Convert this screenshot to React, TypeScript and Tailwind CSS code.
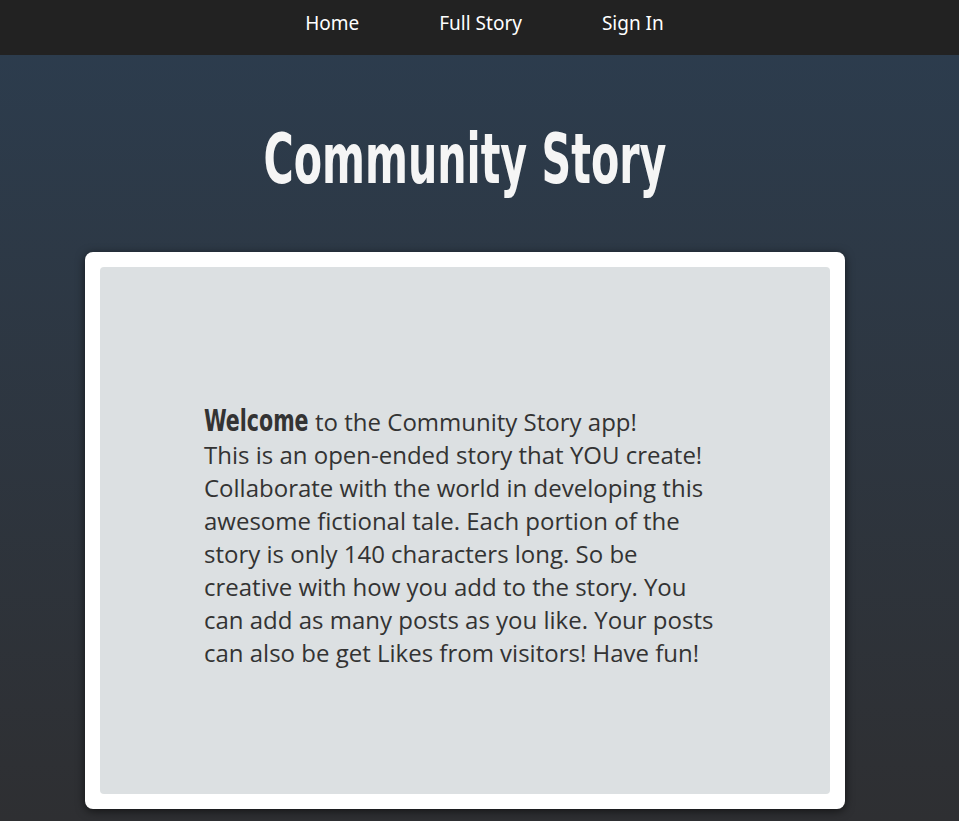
export default function App() {
  const links = ["Home", "Full Story", "Sign In"];

  return (
    <div className="min-h-screen bg-gradient-to-b from-[#2c3d4f] to-[#2e2f32] font-['Open_Sans',sans-serif]">
      <nav className="h-[55px] bg-[#222222] flex justify-center pl-[10px]">
        {links.map((l) => (
          <a
            key={l}
            href="#"
            className="px-10 flex items-center text-white text-[19px] font-['Noto_Sans',sans-serif] pb-[8px]"
          >
            {l}
          </a>
        ))}
      </nav>

      <header className="pt-[66px] pb-[55px] pr-[30px] flex justify-center">
        <h1 className="inline-block [transform:scaleX(0.654)] text-[70px] leading-[76px] font-bold text-[#f5f5f5] font-['DejaVu_Sans_Condensed',sans-serif]">
          Community Story
        </h1>
      </header>

      <main className="px-[85px] pb-3">
        <div className="w-[760px] bg-white rounded-lg p-[15px] shadow-[0_2px_10px_rgba(0,0,0,0.6)]">
          <div className="h-[527px] bg-[#dce0e2] rounded flex items-center pl-[104px] pt-[12px]">
            <p className="w-[516px] text-[24px] leading-[33px] text-[#333333]">
              <span className="inline-block origin-left [transform:scaleX(0.737)] mr-[-37px] text-[31px] leading-[33px] font-bold font-['DejaVu_Sans_Condensed',sans-serif]">
                Welcome
              </span>{" "}
              to the Community Story app!
              <br />
              This is an open-ended story that YOU create! Collaborate with the world in developing this awesome fictional tale. Each portion of the story is only 140 characters long. So be creative with how you add to the story. You can add as many posts as you like. Your posts can also be get Likes from visitors! Have fun!
            </p>
          </div>
        </div>
      </main>
    </div>
  );
}
